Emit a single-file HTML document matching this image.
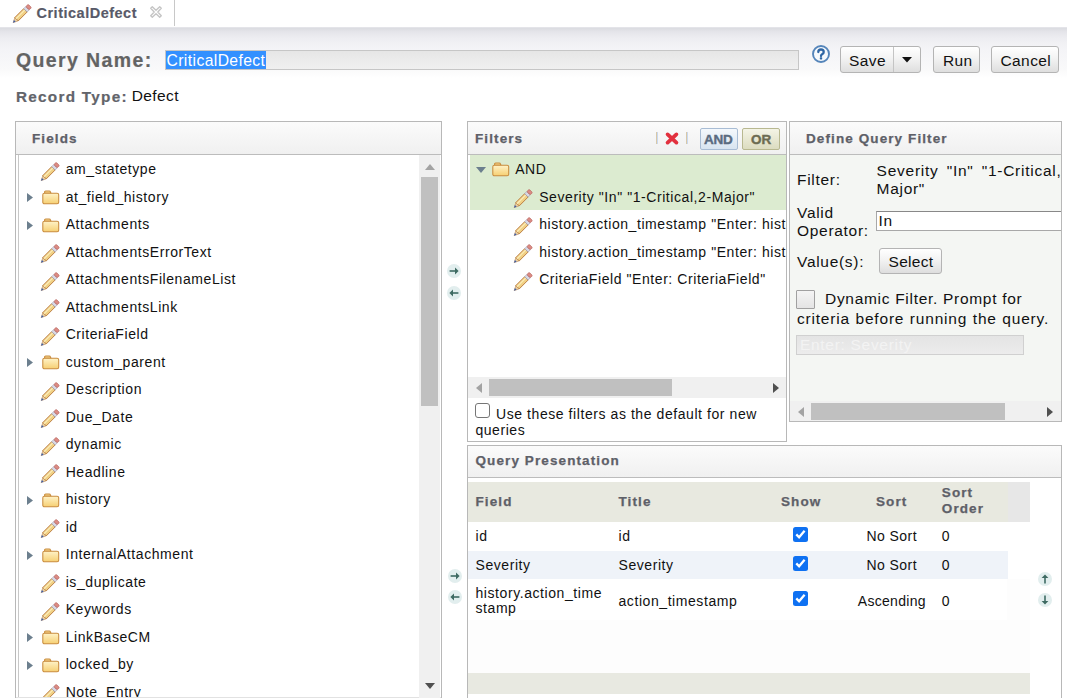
<!DOCTYPE html><html><head><meta charset="utf-8"><style>
*{margin:0;padding:0;box-sizing:border-box}
html,body{width:1067px;height:698px;overflow:hidden;background:#fff;font-family:"Liberation Sans",sans-serif}
.t{position:absolute;white-space:nowrap}
.r{position:absolute}
.ic{position:absolute;overflow:visible}
</style></head><body>
<svg width="0" height="0" style="position:absolute"><defs><linearGradient id="fg" x1="0" y1="0" x2="0" y2="1"><stop offset="0" stop-color="#fff3c8"/><stop offset="1" stop-color="#f6cf72"/></linearGradient></defs></svg>
<div class="r" style="left:0px;top:0px;width:1067px;height:27px;background:#fff"></div>
<svg class="ic" style="left:10.5px;top:3.6px" width="21" height="21" viewBox="0 0 21 21"><g transform="translate(10.5 10.25) rotate(-45)">
<polygon points="-11.8,0 -7,-2.35 -7,2.35" fill="#e8cfa0" stroke="#b98a58" stroke-width="0.6"/>
<polygon points="-12,0 -9.5,-1.2 -9.5,1.2" fill="#3a5eae"/>
<rect x="-7" y="-2.4" width="12.5" height="4.8" fill="#f0d084" stroke="#bb7c40" stroke-width="0.9"/>
<rect x="-7" y="-1.3" width="12.5" height="1.2" fill="#fbecb8"/>
<rect x="5.5" y="-2.4" width="3" height="4.8" fill="#d8d8e4" stroke="#9c9cae" stroke-width="0.6"/>
<rect x="8.5" y="-2.4" width="3.3" height="4.8" rx="1.3" fill="#dc8c84" stroke="#b8605a" stroke-width="0.7"/>
</g></svg>
<div class="t" style="left:36.5px;top:3.48px;font-size:14.5px;line-height:20px;letter-spacing:0.5px;word-spacing:0px;color:#585a68;font-weight:bold;-webkit-text-stroke:0.15px #585a68">CriticalDefect</div>
<svg class="ic" style="left:149.8px;top:6.4px" width="12" height="12" viewBox="0 0 12 12"><path d="M0.7,2.3 L2.3,0.7 L6,4.2 L9.7,0.7 L11.3,2.3 L7.8,6 L11.3,9.7 L9.7,11.3 L6,7.8 L2.3,11.3 L0.7,9.7 L4.2,6 Z" fill="#fcfcfc" stroke="#c4c4c4" stroke-width="1.3" stroke-linejoin="round"/></svg>
<div class="r" style="left:174px;top:0px;width:1px;height:26px;background:#c8c8c8"></div>
<div class="r" style="left:0px;top:27px;width:1067px;height:52px;background:linear-gradient(#e8e8ec 0px,#dcdde2 1.5px,#e5e5ea 5px,#ededf1 11px,#f2f2f5 18px,#f4f4f7 23px,#f9f9fa 42px,#ffffff 51px)"></div>
<div class="t" style="left:16px;top:50.04px;font-size:19.5px;line-height:20px;letter-spacing:1.38px;word-spacing:0px;color:#636363;font-weight:bold;-webkit-text-stroke:0.2px #636363">Query Name:</div>
<div class="r" style="left:165px;top:50px;width:634px;height:20px;background:linear-gradient(#e6e6e6,#f0f0f0);border:1px solid #c6c6c6"></div>
<div class="r" style="left:166px;top:51px;width:100px;height:18px;background:#3390ff"></div>
<div class="t" style="left:166.5px;top:50.76px;font-size:15.7px;line-height:20px;letter-spacing:0.4px;word-spacing:0px;color:#fff;">CriticalDefect</div>
<svg class="ic" style="left:812px;top:45px" width="18" height="18" viewBox="0 0 18 18"><circle cx="9" cy="9" r="8" fill="#f6f9fc" stroke="#5585ba" stroke-width="1.9"/><path d="M6.3,7.1 Q6.3,4.5 9,4.5 Q11.7,4.5 11.7,6.9 Q11.7,8.4 10.1,9.2 Q9,9.8 9,11" fill="none" stroke="#2f66a4" stroke-width="2.3" stroke-linecap="round"/><rect x="7.8" y="12.3" width="2.4" height="2.1" rx="0.6" fill="#2f66a4"/></svg>
<div class="r" style="left:840px;top:46px;width:81px;height:27px;background:linear-gradient(#ffffff,#f3f3f3 45%,#dedede);border:1px solid #b4b4b4;border-radius:3px"></div>
<div class="r" style="left:893px;top:47px;width:1px;height:25px;background:#c4c4c4"></div>
<div class="t" style="left:849px;top:51.23px;font-size:15.5px;line-height:20px;letter-spacing:0.4px;word-spacing:0px;color:#111;">Save</div>
<svg class="ic" style="left:901.5px;top:56.8px" width="10" height="5.6" viewBox="0 0 10 5.6"><polygon points="0,0 10,0 5,5.6" fill="#111"/></svg>
<div class="r" style="left:933px;top:46px;width:47px;height:27px;background:linear-gradient(#ffffff,#f3f3f3 45%,#dedede);border:1px solid #b4b4b4;border-radius:3px"></div>
<div class="t" style="left:943px;top:51.23px;font-size:15.5px;line-height:20px;letter-spacing:0.4px;word-spacing:0px;color:#111;">Run</div>
<div class="r" style="left:991px;top:46px;width:68px;height:27px;background:linear-gradient(#ffffff,#f3f3f3 45%,#dedede);border:1px solid #b4b4b4;border-radius:3px"></div>
<div class="t" style="left:1000.5px;top:51.23px;font-size:15.5px;line-height:20px;letter-spacing:0.4px;word-spacing:0px;color:#111;">Cancel</div>
<div class="t" style="left:16px;top:86.90px;font-size:15.3px;line-height:20px;letter-spacing:1.27px;word-spacing:0px;color:#62646a;font-weight:bold;-webkit-text-stroke:0.2px #62646a">Record Type:</div>
<div class="t" style="left:131.7px;top:86.43px;font-size:15.5px;line-height:20px;letter-spacing:0.4px;word-spacing:0px;color:#111;">Defect</div>
<div class="r" style="left:15px;top:121px;width:427px;height:600px;border:1px solid #b8b8b8;background:#fff"></div>
<div class="r" style="left:16px;top:122px;width:425px;height:32px;background:linear-gradient(#fbfbfb,#f0f0f0);"></div>
<div class="r" style="left:16px;top:154px;width:425px;height:1px;background:#bcbcbc"></div>
<div class="t" style="left:32px;top:128.82px;font-size:13.5px;line-height:20px;letter-spacing:1.1px;word-spacing:0px;color:#5e6068;font-weight:bold;-webkit-text-stroke:0.25px #5e6068">Fields</div>
<div class="r" style="left:18px;top:155px;width:1px;height:560px;background:#c8c8c8"></div>
<svg class="ic" style="left:39.3px;top:161.9px" width="21" height="21" viewBox="0 0 21 21"><g transform="translate(10.5 10.25) rotate(-45)">
<polygon points="-11.8,0 -7,-2.35 -7,2.35" fill="#e8cfa0" stroke="#b98a58" stroke-width="0.6"/>
<polygon points="-12,0 -9.5,-1.2 -9.5,1.2" fill="#3a5eae"/>
<rect x="-7" y="-2.4" width="12.5" height="4.8" fill="#f0d084" stroke="#bb7c40" stroke-width="0.9"/>
<rect x="-7" y="-1.3" width="12.5" height="1.2" fill="#fbecb8"/>
<rect x="5.5" y="-2.4" width="3" height="4.8" fill="#d8d8e4" stroke="#9c9cae" stroke-width="0.6"/>
<rect x="8.5" y="-2.4" width="3.3" height="4.8" rx="1.3" fill="#dc8c84" stroke="#b8605a" stroke-width="0.7"/>
</g></svg>
<div class="t" style="left:65.7px;top:159.35px;font-size:14px;line-height:20px;letter-spacing:0.57px;word-spacing:0px;color:#111;">am_statetype</div>
<svg class="ic" style="left:27.2px;top:193.0px" width="6" height="9" viewBox="0 0 6 9"><polygon points="0,0 6,4.5 0,9" fill="#6c7f8e"/></svg>
<svg class="ic" style="left:42px;top:190px" width="18" height="15" viewBox="0 0 18 15"><defs></defs>
<path d="M2.6,3.2 V2 Q2.6,1 3.6,1 H7.2 Q8.2,1 8.5,2 L8.9,3.2 Z" fill="#f4d48a" stroke="#c98c3e" stroke-width="1.05"/>
<rect x="0.8" y="3.2" width="15.9" height="10.6" rx="1.6" fill="url(#fg)" stroke="#c98c3e" stroke-width="1.05"/>
</svg>
<div class="t" style="left:65.7px;top:186.85px;font-size:14px;line-height:20px;letter-spacing:0.57px;word-spacing:0px;color:#111;">at_field_history</div>
<svg class="ic" style="left:27.2px;top:220.5px" width="6" height="9" viewBox="0 0 6 9"><polygon points="0,0 6,4.5 0,9" fill="#6c7f8e"/></svg>
<svg class="ic" style="left:42px;top:218px" width="18" height="15" viewBox="0 0 18 15"><defs></defs>
<path d="M2.6,3.2 V2 Q2.6,1 3.6,1 H7.2 Q8.2,1 8.5,2 L8.9,3.2 Z" fill="#f4d48a" stroke="#c98c3e" stroke-width="1.05"/>
<rect x="0.8" y="3.2" width="15.9" height="10.6" rx="1.6" fill="url(#fg)" stroke="#c98c3e" stroke-width="1.05"/>
</svg>
<div class="t" style="left:65.7px;top:214.35px;font-size:14px;line-height:20px;letter-spacing:0.57px;word-spacing:0px;color:#111;">Attachments</div>
<svg class="ic" style="left:39.3px;top:244.4px" width="21" height="21" viewBox="0 0 21 21"><g transform="translate(10.5 10.25) rotate(-45)">
<polygon points="-11.8,0 -7,-2.35 -7,2.35" fill="#e8cfa0" stroke="#b98a58" stroke-width="0.6"/>
<polygon points="-12,0 -9.5,-1.2 -9.5,1.2" fill="#3a5eae"/>
<rect x="-7" y="-2.4" width="12.5" height="4.8" fill="#f0d084" stroke="#bb7c40" stroke-width="0.9"/>
<rect x="-7" y="-1.3" width="12.5" height="1.2" fill="#fbecb8"/>
<rect x="5.5" y="-2.4" width="3" height="4.8" fill="#d8d8e4" stroke="#9c9cae" stroke-width="0.6"/>
<rect x="8.5" y="-2.4" width="3.3" height="4.8" rx="1.3" fill="#dc8c84" stroke="#b8605a" stroke-width="0.7"/>
</g></svg>
<div class="t" style="left:65.7px;top:241.85px;font-size:14px;line-height:20px;letter-spacing:0.57px;word-spacing:0px;color:#111;">AttachmentsErrorText</div>
<svg class="ic" style="left:39.3px;top:271.9px" width="21" height="21" viewBox="0 0 21 21"><g transform="translate(10.5 10.25) rotate(-45)">
<polygon points="-11.8,0 -7,-2.35 -7,2.35" fill="#e8cfa0" stroke="#b98a58" stroke-width="0.6"/>
<polygon points="-12,0 -9.5,-1.2 -9.5,1.2" fill="#3a5eae"/>
<rect x="-7" y="-2.4" width="12.5" height="4.8" fill="#f0d084" stroke="#bb7c40" stroke-width="0.9"/>
<rect x="-7" y="-1.3" width="12.5" height="1.2" fill="#fbecb8"/>
<rect x="5.5" y="-2.4" width="3" height="4.8" fill="#d8d8e4" stroke="#9c9cae" stroke-width="0.6"/>
<rect x="8.5" y="-2.4" width="3.3" height="4.8" rx="1.3" fill="#dc8c84" stroke="#b8605a" stroke-width="0.7"/>
</g></svg>
<div class="t" style="left:65.7px;top:269.35px;font-size:14px;line-height:20px;letter-spacing:0.57px;word-spacing:0px;color:#111;">AttachmentsFilenameList</div>
<svg class="ic" style="left:39.3px;top:299.4px" width="21" height="21" viewBox="0 0 21 21"><g transform="translate(10.5 10.25) rotate(-45)">
<polygon points="-11.8,0 -7,-2.35 -7,2.35" fill="#e8cfa0" stroke="#b98a58" stroke-width="0.6"/>
<polygon points="-12,0 -9.5,-1.2 -9.5,1.2" fill="#3a5eae"/>
<rect x="-7" y="-2.4" width="12.5" height="4.8" fill="#f0d084" stroke="#bb7c40" stroke-width="0.9"/>
<rect x="-7" y="-1.3" width="12.5" height="1.2" fill="#fbecb8"/>
<rect x="5.5" y="-2.4" width="3" height="4.8" fill="#d8d8e4" stroke="#9c9cae" stroke-width="0.6"/>
<rect x="8.5" y="-2.4" width="3.3" height="4.8" rx="1.3" fill="#dc8c84" stroke="#b8605a" stroke-width="0.7"/>
</g></svg>
<div class="t" style="left:65.7px;top:296.85px;font-size:14px;line-height:20px;letter-spacing:0.57px;word-spacing:0px;color:#111;">AttachmentsLink</div>
<svg class="ic" style="left:39.3px;top:326.9px" width="21" height="21" viewBox="0 0 21 21"><g transform="translate(10.5 10.25) rotate(-45)">
<polygon points="-11.8,0 -7,-2.35 -7,2.35" fill="#e8cfa0" stroke="#b98a58" stroke-width="0.6"/>
<polygon points="-12,0 -9.5,-1.2 -9.5,1.2" fill="#3a5eae"/>
<rect x="-7" y="-2.4" width="12.5" height="4.8" fill="#f0d084" stroke="#bb7c40" stroke-width="0.9"/>
<rect x="-7" y="-1.3" width="12.5" height="1.2" fill="#fbecb8"/>
<rect x="5.5" y="-2.4" width="3" height="4.8" fill="#d8d8e4" stroke="#9c9cae" stroke-width="0.6"/>
<rect x="8.5" y="-2.4" width="3.3" height="4.8" rx="1.3" fill="#dc8c84" stroke="#b8605a" stroke-width="0.7"/>
</g></svg>
<div class="t" style="left:65.7px;top:324.35px;font-size:14px;line-height:20px;letter-spacing:0.57px;word-spacing:0px;color:#111;">CriteriaField</div>
<svg class="ic" style="left:27.2px;top:358.0px" width="6" height="9" viewBox="0 0 6 9"><polygon points="0,0 6,4.5 0,9" fill="#6c7f8e"/></svg>
<svg class="ic" style="left:42px;top:355px" width="18" height="15" viewBox="0 0 18 15"><defs></defs>
<path d="M2.6,3.2 V2 Q2.6,1 3.6,1 H7.2 Q8.2,1 8.5,2 L8.9,3.2 Z" fill="#f4d48a" stroke="#c98c3e" stroke-width="1.05"/>
<rect x="0.8" y="3.2" width="15.9" height="10.6" rx="1.6" fill="url(#fg)" stroke="#c98c3e" stroke-width="1.05"/>
</svg>
<div class="t" style="left:65.7px;top:351.85px;font-size:14px;line-height:20px;letter-spacing:0.57px;word-spacing:0px;color:#111;">custom_parent</div>
<svg class="ic" style="left:39.3px;top:381.9px" width="21" height="21" viewBox="0 0 21 21"><g transform="translate(10.5 10.25) rotate(-45)">
<polygon points="-11.8,0 -7,-2.35 -7,2.35" fill="#e8cfa0" stroke="#b98a58" stroke-width="0.6"/>
<polygon points="-12,0 -9.5,-1.2 -9.5,1.2" fill="#3a5eae"/>
<rect x="-7" y="-2.4" width="12.5" height="4.8" fill="#f0d084" stroke="#bb7c40" stroke-width="0.9"/>
<rect x="-7" y="-1.3" width="12.5" height="1.2" fill="#fbecb8"/>
<rect x="5.5" y="-2.4" width="3" height="4.8" fill="#d8d8e4" stroke="#9c9cae" stroke-width="0.6"/>
<rect x="8.5" y="-2.4" width="3.3" height="4.8" rx="1.3" fill="#dc8c84" stroke="#b8605a" stroke-width="0.7"/>
</g></svg>
<div class="t" style="left:65.7px;top:379.35px;font-size:14px;line-height:20px;letter-spacing:0.57px;word-spacing:0px;color:#111;">Description</div>
<svg class="ic" style="left:39.3px;top:409.4px" width="21" height="21" viewBox="0 0 21 21"><g transform="translate(10.5 10.25) rotate(-45)">
<polygon points="-11.8,0 -7,-2.35 -7,2.35" fill="#e8cfa0" stroke="#b98a58" stroke-width="0.6"/>
<polygon points="-12,0 -9.5,-1.2 -9.5,1.2" fill="#3a5eae"/>
<rect x="-7" y="-2.4" width="12.5" height="4.8" fill="#f0d084" stroke="#bb7c40" stroke-width="0.9"/>
<rect x="-7" y="-1.3" width="12.5" height="1.2" fill="#fbecb8"/>
<rect x="5.5" y="-2.4" width="3" height="4.8" fill="#d8d8e4" stroke="#9c9cae" stroke-width="0.6"/>
<rect x="8.5" y="-2.4" width="3.3" height="4.8" rx="1.3" fill="#dc8c84" stroke="#b8605a" stroke-width="0.7"/>
</g></svg>
<div class="t" style="left:65.7px;top:406.85px;font-size:14px;line-height:20px;letter-spacing:0.57px;word-spacing:0px;color:#111;">Due_Date</div>
<svg class="ic" style="left:39.3px;top:436.9px" width="21" height="21" viewBox="0 0 21 21"><g transform="translate(10.5 10.25) rotate(-45)">
<polygon points="-11.8,0 -7,-2.35 -7,2.35" fill="#e8cfa0" stroke="#b98a58" stroke-width="0.6"/>
<polygon points="-12,0 -9.5,-1.2 -9.5,1.2" fill="#3a5eae"/>
<rect x="-7" y="-2.4" width="12.5" height="4.8" fill="#f0d084" stroke="#bb7c40" stroke-width="0.9"/>
<rect x="-7" y="-1.3" width="12.5" height="1.2" fill="#fbecb8"/>
<rect x="5.5" y="-2.4" width="3" height="4.8" fill="#d8d8e4" stroke="#9c9cae" stroke-width="0.6"/>
<rect x="8.5" y="-2.4" width="3.3" height="4.8" rx="1.3" fill="#dc8c84" stroke="#b8605a" stroke-width="0.7"/>
</g></svg>
<div class="t" style="left:65.7px;top:434.35px;font-size:14px;line-height:20px;letter-spacing:0.57px;word-spacing:0px;color:#111;">dynamic</div>
<svg class="ic" style="left:39.3px;top:464.4px" width="21" height="21" viewBox="0 0 21 21"><g transform="translate(10.5 10.25) rotate(-45)">
<polygon points="-11.8,0 -7,-2.35 -7,2.35" fill="#e8cfa0" stroke="#b98a58" stroke-width="0.6"/>
<polygon points="-12,0 -9.5,-1.2 -9.5,1.2" fill="#3a5eae"/>
<rect x="-7" y="-2.4" width="12.5" height="4.8" fill="#f0d084" stroke="#bb7c40" stroke-width="0.9"/>
<rect x="-7" y="-1.3" width="12.5" height="1.2" fill="#fbecb8"/>
<rect x="5.5" y="-2.4" width="3" height="4.8" fill="#d8d8e4" stroke="#9c9cae" stroke-width="0.6"/>
<rect x="8.5" y="-2.4" width="3.3" height="4.8" rx="1.3" fill="#dc8c84" stroke="#b8605a" stroke-width="0.7"/>
</g></svg>
<div class="t" style="left:65.7px;top:461.85px;font-size:14px;line-height:20px;letter-spacing:0.57px;word-spacing:0px;color:#111;">Headline</div>
<svg class="ic" style="left:27.2px;top:495.5px" width="6" height="9" viewBox="0 0 6 9"><polygon points="0,0 6,4.5 0,9" fill="#6c7f8e"/></svg>
<svg class="ic" style="left:42px;top:493px" width="18" height="15" viewBox="0 0 18 15"><defs></defs>
<path d="M2.6,3.2 V2 Q2.6,1 3.6,1 H7.2 Q8.2,1 8.5,2 L8.9,3.2 Z" fill="#f4d48a" stroke="#c98c3e" stroke-width="1.05"/>
<rect x="0.8" y="3.2" width="15.9" height="10.6" rx="1.6" fill="url(#fg)" stroke="#c98c3e" stroke-width="1.05"/>
</svg>
<div class="t" style="left:65.7px;top:489.35px;font-size:14px;line-height:20px;letter-spacing:0.57px;word-spacing:0px;color:#111;">history</div>
<svg class="ic" style="left:39.3px;top:519.4px" width="21" height="21" viewBox="0 0 21 21"><g transform="translate(10.5 10.25) rotate(-45)">
<polygon points="-11.8,0 -7,-2.35 -7,2.35" fill="#e8cfa0" stroke="#b98a58" stroke-width="0.6"/>
<polygon points="-12,0 -9.5,-1.2 -9.5,1.2" fill="#3a5eae"/>
<rect x="-7" y="-2.4" width="12.5" height="4.8" fill="#f0d084" stroke="#bb7c40" stroke-width="0.9"/>
<rect x="-7" y="-1.3" width="12.5" height="1.2" fill="#fbecb8"/>
<rect x="5.5" y="-2.4" width="3" height="4.8" fill="#d8d8e4" stroke="#9c9cae" stroke-width="0.6"/>
<rect x="8.5" y="-2.4" width="3.3" height="4.8" rx="1.3" fill="#dc8c84" stroke="#b8605a" stroke-width="0.7"/>
</g></svg>
<div class="t" style="left:65.7px;top:516.85px;font-size:14px;line-height:20px;letter-spacing:0.57px;word-spacing:0px;color:#111;">id</div>
<svg class="ic" style="left:27.2px;top:550.5px" width="6" height="9" viewBox="0 0 6 9"><polygon points="0,0 6,4.5 0,9" fill="#6c7f8e"/></svg>
<svg class="ic" style="left:42px;top:548px" width="18" height="15" viewBox="0 0 18 15"><defs></defs>
<path d="M2.6,3.2 V2 Q2.6,1 3.6,1 H7.2 Q8.2,1 8.5,2 L8.9,3.2 Z" fill="#f4d48a" stroke="#c98c3e" stroke-width="1.05"/>
<rect x="0.8" y="3.2" width="15.9" height="10.6" rx="1.6" fill="url(#fg)" stroke="#c98c3e" stroke-width="1.05"/>
</svg>
<div class="t" style="left:65.7px;top:544.35px;font-size:14px;line-height:20px;letter-spacing:0.57px;word-spacing:0px;color:#111;">InternalAttachment</div>
<svg class="ic" style="left:39.3px;top:574.4px" width="21" height="21" viewBox="0 0 21 21"><g transform="translate(10.5 10.25) rotate(-45)">
<polygon points="-11.8,0 -7,-2.35 -7,2.35" fill="#e8cfa0" stroke="#b98a58" stroke-width="0.6"/>
<polygon points="-12,0 -9.5,-1.2 -9.5,1.2" fill="#3a5eae"/>
<rect x="-7" y="-2.4" width="12.5" height="4.8" fill="#f0d084" stroke="#bb7c40" stroke-width="0.9"/>
<rect x="-7" y="-1.3" width="12.5" height="1.2" fill="#fbecb8"/>
<rect x="5.5" y="-2.4" width="3" height="4.8" fill="#d8d8e4" stroke="#9c9cae" stroke-width="0.6"/>
<rect x="8.5" y="-2.4" width="3.3" height="4.8" rx="1.3" fill="#dc8c84" stroke="#b8605a" stroke-width="0.7"/>
</g></svg>
<div class="t" style="left:65.7px;top:571.85px;font-size:14px;line-height:20px;letter-spacing:0.57px;word-spacing:0px;color:#111;">is_duplicate</div>
<svg class="ic" style="left:39.3px;top:601.9px" width="21" height="21" viewBox="0 0 21 21"><g transform="translate(10.5 10.25) rotate(-45)">
<polygon points="-11.8,0 -7,-2.35 -7,2.35" fill="#e8cfa0" stroke="#b98a58" stroke-width="0.6"/>
<polygon points="-12,0 -9.5,-1.2 -9.5,1.2" fill="#3a5eae"/>
<rect x="-7" y="-2.4" width="12.5" height="4.8" fill="#f0d084" stroke="#bb7c40" stroke-width="0.9"/>
<rect x="-7" y="-1.3" width="12.5" height="1.2" fill="#fbecb8"/>
<rect x="5.5" y="-2.4" width="3" height="4.8" fill="#d8d8e4" stroke="#9c9cae" stroke-width="0.6"/>
<rect x="8.5" y="-2.4" width="3.3" height="4.8" rx="1.3" fill="#dc8c84" stroke="#b8605a" stroke-width="0.7"/>
</g></svg>
<div class="t" style="left:65.7px;top:599.35px;font-size:14px;line-height:20px;letter-spacing:0.57px;word-spacing:0px;color:#111;">Keywords</div>
<svg class="ic" style="left:27.2px;top:633.0px" width="6" height="9" viewBox="0 0 6 9"><polygon points="0,0 6,4.5 0,9" fill="#6c7f8e"/></svg>
<svg class="ic" style="left:42px;top:630px" width="18" height="15" viewBox="0 0 18 15"><defs></defs>
<path d="M2.6,3.2 V2 Q2.6,1 3.6,1 H7.2 Q8.2,1 8.5,2 L8.9,3.2 Z" fill="#f4d48a" stroke="#c98c3e" stroke-width="1.05"/>
<rect x="0.8" y="3.2" width="15.9" height="10.6" rx="1.6" fill="url(#fg)" stroke="#c98c3e" stroke-width="1.05"/>
</svg>
<div class="t" style="left:65.7px;top:626.85px;font-size:14px;line-height:20px;letter-spacing:0.57px;word-spacing:0px;color:#111;">LinkBaseCM</div>
<svg class="ic" style="left:27.2px;top:660.5px" width="6" height="9" viewBox="0 0 6 9"><polygon points="0,0 6,4.5 0,9" fill="#6c7f8e"/></svg>
<svg class="ic" style="left:42px;top:658px" width="18" height="15" viewBox="0 0 18 15"><defs></defs>
<path d="M2.6,3.2 V2 Q2.6,1 3.6,1 H7.2 Q8.2,1 8.5,2 L8.9,3.2 Z" fill="#f4d48a" stroke="#c98c3e" stroke-width="1.05"/>
<rect x="0.8" y="3.2" width="15.9" height="10.6" rx="1.6" fill="url(#fg)" stroke="#c98c3e" stroke-width="1.05"/>
</svg>
<div class="t" style="left:65.7px;top:654.35px;font-size:14px;line-height:20px;letter-spacing:0.57px;word-spacing:0px;color:#111;">locked_by</div>
<svg class="ic" style="left:39.3px;top:684.4px" width="21" height="21" viewBox="0 0 21 21"><g transform="translate(10.5 10.25) rotate(-45)">
<polygon points="-11.8,0 -7,-2.35 -7,2.35" fill="#e8cfa0" stroke="#b98a58" stroke-width="0.6"/>
<polygon points="-12,0 -9.5,-1.2 -9.5,1.2" fill="#3a5eae"/>
<rect x="-7" y="-2.4" width="12.5" height="4.8" fill="#f0d084" stroke="#bb7c40" stroke-width="0.9"/>
<rect x="-7" y="-1.3" width="12.5" height="1.2" fill="#fbecb8"/>
<rect x="5.5" y="-2.4" width="3" height="4.8" fill="#d8d8e4" stroke="#9c9cae" stroke-width="0.6"/>
<rect x="8.5" y="-2.4" width="3.3" height="4.8" rx="1.3" fill="#dc8c84" stroke="#b8605a" stroke-width="0.7"/>
</g></svg>
<div class="t" style="left:65.7px;top:681.85px;font-size:14px;line-height:20px;letter-spacing:0.57px;word-spacing:0px;color:#111;">Note_Entry</div>
<div class="r" style="left:16px;top:697px;width:425px;height:1px;background:#e2e2e2"></div>
<div class="r" style="left:419px;top:155px;width:21px;height:545px;background:#f0f0f0"></div>
<div class="r" style="left:421px;top:177px;width:17px;height:229px;background:#c0c0c0"></div>
<svg class="ic" style="left:425px;top:164px" width="10" height="6" viewBox="0 0 10 6"><polygon points="0,6 10,6 5,0" fill="#a3a3a3"/></svg>
<svg class="ic" style="left:425px;top:683px" width="10" height="6" viewBox="0 0 10 6"><polygon points="0,0 10,0 5,6" fill="#505050"/></svg>
<svg class="ic" style="left:447.2px;top:264.3px" width="14" height="14" viewBox="0 0 14 14"><circle cx="7" cy="7" r="7" fill="#e2eeee"/><g transform="rotate(0 7 7)"><path d="M2.6,7 H9.5" stroke="#3e6a62" stroke-width="1.6"/><polygon points="11.6,7 8,3.6 8,10.4" fill="#3e6a62"/></g></svg>
<svg class="ic" style="left:447.2px;top:286.2px" width="14" height="14" viewBox="0 0 14 14"><circle cx="7" cy="7" r="7" fill="#e2eeee"/><g transform="rotate(180 7 7)"><path d="M2.6,7 H9.5" stroke="#3e6a62" stroke-width="1.6"/><polygon points="11.6,7 8,3.6 8,10.4" fill="#3e6a62"/></g></svg>
<div class="r" style="left:467px;top:121px;width:320px;height:321px;border:1px solid #b8b8b8;background:#fff"></div>
<div class="r" style="left:468px;top:122px;width:318px;height:32px;background:linear-gradient(#fbfbfb,#f0f0f0);"></div>
<div class="r" style="left:468px;top:154px;width:318px;height:1px;background:#bcbcbc"></div>
<div class="t" style="left:475px;top:128.82px;font-size:13.5px;line-height:20px;letter-spacing:1.1px;word-spacing:0px;color:#5e6068;font-weight:bold;-webkit-text-stroke:0.25px #5e6068">Filters</div>
<div class="r" style="left:656px;top:132px;width:1px;height:12px;background:#d8c8a8"></div>
<div class="r" style="left:657px;top:132px;width:1px;height:12px;background:#c8d8f0"></div>
<svg class="ic" style="left:665px;top:132px" width="14" height="13" viewBox="0 0 14 13"><path d="M2.6,2.4 L11.4,10.6 M11.4,2.4 L2.6,10.6" stroke="#e2303e" stroke-width="3.8" stroke-linecap="round"/></svg>
<div class="r" style="left:686px;top:132px;width:1px;height:12px;background:#d8c8a8"></div>
<div class="r" style="left:687px;top:132px;width:1px;height:12px;background:#c8d8f0"></div>
<div class="r" style="left:700px;top:128px;width:38px;height:22px;background:linear-gradient(#f4f8fc,#d8e4f0);border:1px solid #a8bcd4;border-radius:2px"></div>
<div class="t" style="left:704px;top:129.82px;font-size:13.5px;line-height:20px;letter-spacing:-0.2px;word-spacing:0px;color:#5a6b80;font-weight:bold;-webkit-text-stroke:0.4px #5a6b80">AND</div>
<div class="r" style="left:742px;top:128px;width:38px;height:22px;background:linear-gradient(#f4f4e6,#dcdcc0);border:1px solid #b8b890;border-radius:2px"></div>
<div class="t" style="left:751px;top:129.82px;font-size:13.5px;line-height:20px;letter-spacing:0px;word-spacing:0px;color:#6c6c52;font-weight:bold;-webkit-text-stroke:0.4px #6c6c52">OR</div>
<div class="r" style="left:470px;top:155px;width:316px;height:55px;background:#dcebd0"></div>
<svg class="ic" style="left:476px;top:167px" width="10" height="6" viewBox="0 0 10 6"><polygon points="0,0 10,0 5,6" fill="#6c7f8e"/></svg>
<svg class="ic" style="left:492px;top:162px" width="18" height="15" viewBox="0 0 18 15"><defs></defs>
<path d="M2.6,3.2 V2 Q2.6,1 3.6,1 H7.2 Q8.2,1 8.5,2 L8.9,3.2 Z" fill="#f4d48a" stroke="#c98c3e" stroke-width="1.05"/>
<rect x="0.8" y="3.2" width="15.9" height="10.6" rx="1.6" fill="url(#fg)" stroke="#c98c3e" stroke-width="1.05"/>
</svg>
<div class="t" style="left:515.2px;top:159.15px;font-size:14px;line-height:20px;letter-spacing:0.57px;word-spacing:0px;color:#111;">AND</div>
<div class="r" style="left:468px;top:155px;width:318px;height:220px;overflow:hidden">
<svg class="ic" style="left:44.299999999999955px;top:34.2px" width="21" height="21" viewBox="0 0 21 21"><g transform="translate(10.5 10.25) rotate(-45)">
<polygon points="-11.8,0 -7,-2.35 -7,2.35" fill="#e8cfa0" stroke="#b98a58" stroke-width="0.6"/>
<polygon points="-12,0 -9.5,-1.2 -9.5,1.2" fill="#3a5eae"/>
<rect x="-7" y="-2.4" width="12.5" height="4.8" fill="#f0d084" stroke="#bb7c40" stroke-width="0.9"/>
<rect x="-7" y="-1.3" width="12.5" height="1.2" fill="#fbecb8"/>
<rect x="5.5" y="-2.4" width="3" height="4.8" fill="#d8d8e4" stroke="#9c9cae" stroke-width="0.6"/>
<rect x="8.5" y="-2.4" width="3.3" height="4.8" rx="1.3" fill="#dc8c84" stroke="#b8605a" stroke-width="0.7"/>
</g></svg>
<div class="t" style="left:71.20000000000005px;top:31.85px;font-size:14px;line-height:20px;letter-spacing:0.57px;word-spacing:0px;color:#111;">Severity &quot;In&quot; &quot;1-Critical,2-Major&quot;</div>
<svg class="ic" style="left:44.299999999999955px;top:61.7px" width="21" height="21" viewBox="0 0 21 21"><g transform="translate(10.5 10.25) rotate(-45)">
<polygon points="-11.8,0 -7,-2.35 -7,2.35" fill="#e8cfa0" stroke="#b98a58" stroke-width="0.6"/>
<polygon points="-12,0 -9.5,-1.2 -9.5,1.2" fill="#3a5eae"/>
<rect x="-7" y="-2.4" width="12.5" height="4.8" fill="#f0d084" stroke="#bb7c40" stroke-width="0.9"/>
<rect x="-7" y="-1.3" width="12.5" height="1.2" fill="#fbecb8"/>
<rect x="5.5" y="-2.4" width="3" height="4.8" fill="#d8d8e4" stroke="#9c9cae" stroke-width="0.6"/>
<rect x="8.5" y="-2.4" width="3.3" height="4.8" rx="1.3" fill="#dc8c84" stroke="#b8605a" stroke-width="0.7"/>
</g></svg>
<div class="t" style="left:71.20000000000005px;top:59.35px;font-size:14px;line-height:20px;letter-spacing:0.57px;word-spacing:0px;color:#111;">history.action_timestamp &quot;Enter: history.action_timestamp&quot;</div>
<svg class="ic" style="left:44.299999999999955px;top:89.2px" width="21" height="21" viewBox="0 0 21 21"><g transform="translate(10.5 10.25) rotate(-45)">
<polygon points="-11.8,0 -7,-2.35 -7,2.35" fill="#e8cfa0" stroke="#b98a58" stroke-width="0.6"/>
<polygon points="-12,0 -9.5,-1.2 -9.5,1.2" fill="#3a5eae"/>
<rect x="-7" y="-2.4" width="12.5" height="4.8" fill="#f0d084" stroke="#bb7c40" stroke-width="0.9"/>
<rect x="-7" y="-1.3" width="12.5" height="1.2" fill="#fbecb8"/>
<rect x="5.5" y="-2.4" width="3" height="4.8" fill="#d8d8e4" stroke="#9c9cae" stroke-width="0.6"/>
<rect x="8.5" y="-2.4" width="3.3" height="4.8" rx="1.3" fill="#dc8c84" stroke="#b8605a" stroke-width="0.7"/>
</g></svg>
<div class="t" style="left:71.20000000000005px;top:86.85px;font-size:14px;line-height:20px;letter-spacing:0.57px;word-spacing:0px;color:#111;">history.action_timestamp &quot;Enter: history.action_timestamp&quot;</div>
<svg class="ic" style="left:44.299999999999955px;top:116.7px" width="21" height="21" viewBox="0 0 21 21"><g transform="translate(10.5 10.25) rotate(-45)">
<polygon points="-11.8,0 -7,-2.35 -7,2.35" fill="#e8cfa0" stroke="#b98a58" stroke-width="0.6"/>
<polygon points="-12,0 -9.5,-1.2 -9.5,1.2" fill="#3a5eae"/>
<rect x="-7" y="-2.4" width="12.5" height="4.8" fill="#f0d084" stroke="#bb7c40" stroke-width="0.9"/>
<rect x="-7" y="-1.3" width="12.5" height="1.2" fill="#fbecb8"/>
<rect x="5.5" y="-2.4" width="3" height="4.8" fill="#d8d8e4" stroke="#9c9cae" stroke-width="0.6"/>
<rect x="8.5" y="-2.4" width="3.3" height="4.8" rx="1.3" fill="#dc8c84" stroke="#b8605a" stroke-width="0.7"/>
</g></svg>
<div class="t" style="left:71.20000000000005px;top:114.35px;font-size:14px;line-height:20px;letter-spacing:0.57px;word-spacing:0px;color:#111;">CriteriaField &quot;Enter: CriteriaField&quot;</div>
</div>
<div class="r" style="left:468px;top:377px;width:318px;height:21px;background:#f0f0f0"></div>
<div class="r" style="left:489px;top:379px;width:183px;height:17px;background:#c0c0c0"></div>
<svg class="ic" style="left:476px;top:383px" width="6" height="10" viewBox="0 0 6 10"><polygon points="6,0 0,5 6,10" fill="#a3a3a3"/></svg>
<svg class="ic" style="left:773px;top:383px" width="6" height="10" viewBox="0 0 6 10"><polygon points="0,0 6,5 0,10" fill="#505050"/></svg>
<div class="r" style="left:475px;top:403px;width:15px;height:15px;border:1px solid #767676;border-radius:3px;background:#fff"></div>
<div class="t" style="left:496px;top:404.15px;font-size:14px;line-height:20px;letter-spacing:0.57px;word-spacing:0px;color:#111;">Use these filters as the default for new</div>
<div class="t" style="left:475.4px;top:420.15px;font-size:14px;line-height:20px;letter-spacing:0.57px;word-spacing:0px;color:#111;">queries</div>
<div class="r" style="left:789px;top:121px;width:273px;height:301px;border:1px solid #b8b8b8;background:#f4f6f3"></div>
<div class="r" style="left:790px;top:122px;width:271px;height:32px;background:linear-gradient(#fbfbfb,#f0f0f0);"></div>
<div class="r" style="left:790px;top:154px;width:271px;height:1px;background:#bcbcbc"></div>
<div class="t" style="left:806px;top:128.82px;font-size:13.5px;line-height:20px;letter-spacing:1.1px;word-spacing:0px;color:#5e6068;font-weight:bold;-webkit-text-stroke:0.25px #5e6068">Define Query Filter</div>
<div class="r" style="left:790px;top:155px;width:271px;height:245px;overflow:hidden">
<div class="t" style="left:7px;top:14.63px;font-size:15.5px;line-height:20px;letter-spacing:0.7px;word-spacing:0px;color:#111;">Filter:</div>
<div class="t" style="left:86.60000000000002px;top:5.63px;font-size:15.5px;line-height:20px;letter-spacing:0.75px;word-spacing:3px;color:#111;">Severity &quot;In&quot; &quot;1-Critical,2-</div>
<div class="t" style="left:86.60000000000002px;top:23.93px;font-size:15.5px;line-height:20px;letter-spacing:0.7px;word-spacing:0px;color:#111;">Major&quot;</div>
<div class="t" style="left:7px;top:47.83px;font-size:15.5px;line-height:20px;letter-spacing:0.7px;word-spacing:0px;color:#111;">Valid</div>
<div class="t" style="left:7px;top:66.23px;font-size:15.5px;line-height:20px;letter-spacing:0.7px;word-spacing:0px;color:#111;">Operator:</div>
<div class="r" style="left:86px;top:56px;width:200px;height:20px;background:#fff;border:1px solid #a8a8a8;border-top-color:#888"></div>
<div class="t" style="left:88.5px;top:56.43px;font-size:15.5px;line-height:20px;letter-spacing:0.7px;word-spacing:0px;color:#111;">In</div>
<div class="t" style="left:7px;top:96.53px;font-size:15.5px;line-height:20px;letter-spacing:0.7px;word-spacing:0px;color:#111;">Value(s):</div>
<div class="r" style="left:89px;top:93px;width:63px;height:26px;background:linear-gradient(#ffffff,#f3f3f3 45%,#dedede);border:1px solid #b4b4b4;border-radius:3px"></div>
<div class="t" style="left:98.5px;top:96.83px;font-size:15.5px;line-height:20px;letter-spacing:0.3px;word-spacing:0px;color:#111;">Select</div>
<div class="r" style="left:6px;top:135px;width:19px;height:19px;border:1px solid #a0a0a0;background:linear-gradient(#f4f4f4,#e4e4e4);border-radius:1px"></div>
<div class="t" style="left:35px;top:133.83px;font-size:15.5px;line-height:20px;letter-spacing:0.7px;word-spacing:0px;color:#111;">Dynamic Filter. Prompt for</div>
<div class="t" style="left:7px;top:154.33px;font-size:15.5px;line-height:20px;letter-spacing:0.8px;word-spacing:0.5px;color:#111;">criteria before running the query.</div>
<div class="r" style="left:6px;top:180px;width:228px;height:20px;background:linear-gradient(#e4e4e4,#ececec);border:1px solid #d0d0d0"></div>
<div class="t" style="left:10px;top:180.13px;font-size:15.5px;line-height:20px;letter-spacing:0.7px;word-spacing:0px;color:#f3f3f3;">Enter: Severity</div>
</div>
<div class="r" style="left:790px;top:401px;width:271px;height:20px;background:#f0f0f0"></div>
<div class="r" style="left:811px;top:403px;width:194px;height:17px;background:#c0c0c0"></div>
<svg class="ic" style="left:798px;top:407px" width="6" height="10" viewBox="0 0 6 10"><polygon points="6,0 0,5 6,10" fill="#a3a3a3"/></svg>
<svg class="ic" style="left:1047px;top:407px" width="6" height="10" viewBox="0 0 6 10"><polygon points="0,0 6,5 0,10" fill="#505050"/></svg>
<div class="r" style="left:467px;top:445px;width:595px;height:276px;border:1px solid #b8b8b8;background:#fff"></div>
<div class="r" style="left:468px;top:446px;width:593px;height:31px;background:linear-gradient(#fbfbfb,#f0f0f0);"></div>
<div class="r" style="left:468px;top:477px;width:593px;height:1px;background:#bcbcbc"></div>
<div class="t" style="left:475.5px;top:451.32px;font-size:13.5px;line-height:20px;letter-spacing:1.1px;word-spacing:0px;color:#5e6068;font-weight:bold;-webkit-text-stroke:0.25px #5e6068">Query Presentation</div>
<div class="r" style="left:468px;top:482px;width:540px;height:40px;background:#e8e9e0"></div>
<div class="r" style="left:1008px;top:482px;width:22px;height:40px;background:#e7e7e7"></div>
<div class="t" style="left:475.5px;top:492.12px;font-size:13.5px;line-height:20px;letter-spacing:1.1px;word-spacing:0px;color:#5e6068;font-weight:bold;-webkit-text-stroke:0.25px #5e6068">Field</div>
<div class="t" style="left:618.5px;top:492.12px;font-size:13.5px;line-height:20px;letter-spacing:1.1px;word-spacing:0px;color:#5e6068;font-weight:bold;-webkit-text-stroke:0.25px #5e6068">Title</div>
<div class="t" style="left:781px;top:492.12px;font-size:13.5px;line-height:20px;letter-spacing:1.1px;word-spacing:0px;color:#5e6068;font-weight:bold;-webkit-text-stroke:0.25px #5e6068">Show</div>
<div class="t" style="left:876px;top:492.12px;font-size:13.5px;line-height:20px;letter-spacing:1.1px;word-spacing:0px;color:#5e6068;font-weight:bold;-webkit-text-stroke:0.25px #5e6068">Sort</div>
<div class="t" style="left:941.8px;top:483.32px;font-size:13.5px;line-height:20px;letter-spacing:1.1px;word-spacing:0px;color:#5e6068;font-weight:bold;-webkit-text-stroke:0.25px #5e6068">Sort</div>
<div class="t" style="left:941.8px;top:499.12px;font-size:13.5px;line-height:20px;letter-spacing:1.1px;word-spacing:0px;color:#5e6068;font-weight:bold;-webkit-text-stroke:0.25px #5e6068">Order</div>
<div class="r" style="left:468px;top:522px;width:540px;height:29px;background:#fff"></div>
<div class="r" style="left:468px;top:551px;width:540px;height:28px;background:#eff3f9"></div>
<div class="r" style="left:468px;top:579px;width:562px;height:94px;background:#fdfdfd"></div>
<div class="r" style="left:468px;top:579px;width:539px;height:41px;background:#fff"></div>
<div class="r" style="left:468px;top:673px;width:562px;height:21px;background:#e8e9e1"></div>
<div class="t" style="left:475.5px;top:526.35px;font-size:14px;line-height:20px;letter-spacing:0.57px;word-spacing:0px;color:#111;">id</div>
<div class="t" style="left:618.5px;top:526.35px;font-size:14px;line-height:20px;letter-spacing:0.57px;word-spacing:0px;color:#111;">id</div>
<svg class="ic" style="left:793px;top:527px" width="15" height="15" viewBox="0 0 15 15"><rect x="0" y="0" width="15" height="15" rx="2.5" fill="#0f71f2"/><path d="M3.3,7.4 L6.1,10.3 L11.6,3.8" fill="none" stroke="#fff" stroke-width="2.3"/></svg>
<div class="t" style="left:866.4px;top:526.35px;font-size:14px;line-height:20px;letter-spacing:0.45px;word-spacing:0px;color:#111;">No Sort</div>
<div class="t" style="left:941.8px;top:526.35px;font-size:14px;line-height:20px;letter-spacing:0.57px;word-spacing:0px;color:#111;">0</div>
<div class="t" style="left:475.5px;top:555.15px;font-size:14px;line-height:20px;letter-spacing:0.57px;word-spacing:0px;color:#111;">Severity</div>
<div class="t" style="left:618.5px;top:555.15px;font-size:14px;line-height:20px;letter-spacing:0.57px;word-spacing:0px;color:#111;">Severity</div>
<svg class="ic" style="left:793px;top:556px" width="15" height="15" viewBox="0 0 15 15"><rect x="0" y="0" width="15" height="15" rx="2.5" fill="#0f71f2"/><path d="M3.3,7.4 L6.1,10.3 L11.6,3.8" fill="none" stroke="#fff" stroke-width="2.3"/></svg>
<div class="t" style="left:866.4px;top:555.15px;font-size:14px;line-height:20px;letter-spacing:0.45px;word-spacing:0px;color:#111;">No Sort</div>
<div class="t" style="left:941.8px;top:555.15px;font-size:14px;line-height:20px;letter-spacing:0.57px;word-spacing:0px;color:#111;">0</div>
<div class="t" style="left:618.5px;top:591.15px;font-size:14px;line-height:20px;letter-spacing:0.57px;word-spacing:0px;color:#111;">action_timestamp</div>
<svg class="ic" style="left:793px;top:591px" width="15" height="15" viewBox="0 0 15 15"><rect x="0" y="0" width="15" height="15" rx="2.5" fill="#0f71f2"/><path d="M3.3,7.4 L6.1,10.3 L11.6,3.8" fill="none" stroke="#fff" stroke-width="2.3"/></svg>
<div class="t" style="left:857.8px;top:591.15px;font-size:14px;line-height:20px;letter-spacing:0.3px;word-spacing:0px;color:#111;">Ascending</div>
<div class="t" style="left:941.8px;top:591.15px;font-size:14px;line-height:20px;letter-spacing:0.57px;word-spacing:0px;color:#111;">0</div>
<div class="t" style="left:475.5px;top:582.55px;font-size:14px;line-height:20px;letter-spacing:0.57px;word-spacing:0px;color:#111;">history.action_time</div>
<div class="t" style="left:475.5px;top:598.35px;font-size:14px;line-height:20px;letter-spacing:0.57px;word-spacing:0px;color:#111;">stamp</div>
<svg class="ic" style="left:447.5px;top:568.5px" width="14" height="14" viewBox="0 0 14 14"><circle cx="7" cy="7" r="7" fill="#e2eeee"/><g transform="rotate(0 7 7)"><path d="M2.6,7 H9.5" stroke="#3e6a62" stroke-width="1.6"/><polygon points="11.6,7 8,3.6 8,10.4" fill="#3e6a62"/></g></svg>
<svg class="ic" style="left:447.5px;top:589.5px" width="14" height="14" viewBox="0 0 14 14"><circle cx="7" cy="7" r="7" fill="#e2eeee"/><g transform="rotate(180 7 7)"><path d="M2.6,7 H9.5" stroke="#3e6a62" stroke-width="1.6"/><polygon points="11.6,7 8,3.6 8,10.4" fill="#3e6a62"/></g></svg>
<svg class="ic" style="left:1038.3px;top:571.5px" width="14" height="14" viewBox="0 0 14 14"><circle cx="7" cy="7" r="7" fill="#e2eeee"/><g transform="rotate(270 7 7)"><path d="M2.6,7 H9.5" stroke="#3e6a62" stroke-width="1.6"/><polygon points="11.6,7 8,3.6 8,10.4" fill="#3e6a62"/></g></svg>
<svg class="ic" style="left:1038.3px;top:592.5px" width="14" height="14" viewBox="0 0 14 14"><circle cx="7" cy="7" r="7" fill="#e2eeee"/><g transform="rotate(90 7 7)"><path d="M2.6,7 H9.5" stroke="#3e6a62" stroke-width="1.6"/><polygon points="11.6,7 8,3.6 8,10.4" fill="#3e6a62"/></g></svg>
</body></html>
